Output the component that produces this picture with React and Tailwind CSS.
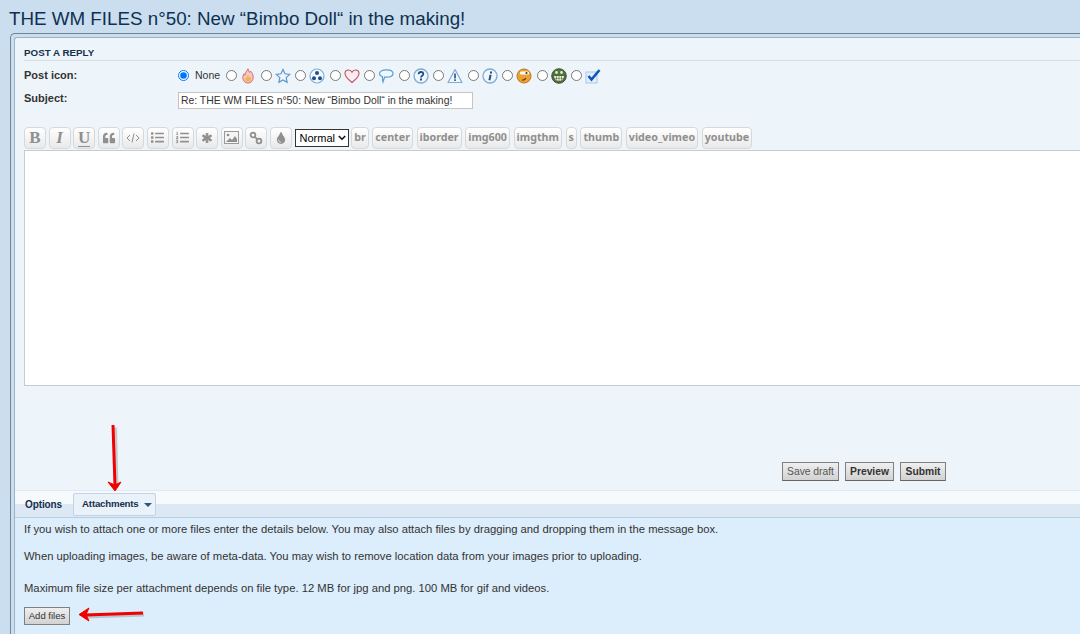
import React from 'react';
import { FaQuoteLeft, FaList, FaListOl, FaAsterisk, FaTint } from 'react-icons/fa';

const Flame = () => (
  <svg width="16" height="16" viewBox="0 0 16 16">
    <path d="M8 .8c.2 1.700 1.200 2.500 1.700 3.700.5-.3.700-.8.800-1.400 1.500 1.500 2.700 3.300 2.700 6.200 0 3.500-2.300 5.700-5.200 5.700s-5.200-2.200-5.200-5.500c0-1.500.6-2.700 1.300-3.700.2.700.4 1.100.8 1.400C5 5 6.800 3 8 .8z" fill="#f6c9c4" stroke="#d9666a" strokeWidth="1" />
    <path d="M8 6.500c0 2 1 2 1.500 3 .5-.3.700-.7.800-1.200.8 1.200 1 3 .4 4.200-.6 1.300-4.900 1.300-5.400 0-.6-1.500.3-2.500 1-3.500.3.500.5.700.8.800C6.800 8.800 7.500 7.500 8 6.500z" fill="#f5b54a" />
  </svg>
);
const Star = () => (
  <svg width="16" height="16" viewBox="0 0 16 16">
    <path d="M8 1.500l2 4.300 4.700.6-3.500 3.200.9 4.700L8 12l-4.100 2.300.9-4.700L1.300 6.400 6 5.800z" fill="#eef5fb" stroke="#5a97cf" strokeWidth="1.200" />
  </svg>
);
const Radioactive = () => (
  <svg width="16" height="16" viewBox="0 0 16 16">
    <circle cx="8" cy="8" r="7" fill="#f4f8fc" stroke="#7fabd6" strokeWidth="1.200" />
    <circle cx="8" cy="5" r="2" fill="#1f4f8a" />
    <circle cx="5" cy="10.300" r="2" fill="#1f4f8a" />
    <circle cx="11" cy="10.300" r="2" fill="#1f4f8a" />
  </svg>
);
const Heart = () => (
  <svg width="16" height="16" viewBox="0 0 16 16">
    <path d="M8 14.500C3 10.500 1 8.500 1 5.500 1 3.300 2.700 2 4.500 2 6 2 7.300 2.800 8 4.200 8.700 2.800 10 2 11.500 2 13.300 2 15 3.300 15 5.500c0 3-2 5-7 9z" fill="#f7eef0" stroke="#c9505f" strokeWidth="1.100" />
  </svg>
);
const Bubble = () => (
  <svg width="16" height="16" viewBox="0 0 16 16">
    <path d="M8.500 1.800c3.500 0 6.500 1.300 6.500 3.700S12 9.200 8.500 9.200c-.7 0-1.300 0-2-.1-.3 1.800-1 3.400-1.500 4.900-.5-1.700-.6-3.500-.6-5.500C2.500 7.900 1.500 6.800 1.500 5.500c0-2.400 3.500-3.700 7-3.700z" fill="#f0f7fd" stroke="#5a9fd6" strokeWidth="1.200" />
  </svg>
);
const Question = () => (
  <svg width="16" height="16" viewBox="0 0 16 16">
    <circle cx="8" cy="8" r="7" fill="#f1f6fb" stroke="#7fabd6" strokeWidth="1.300" />
    <path d="M5.700 6.200C5.700 4.800 6.800 4 8 4s2.300.8 2.300 2.100C10.300 7.800 8 7.800 8 9.500" fill="none" stroke="#1f4f8a" strokeWidth="1.800" />
    <rect x="7" y="10.500" width="2" height="2" fill="#1f4f8a" />
  </svg>
);
const Warning = () => (
  <svg width="16" height="16" viewBox="0 0 16 16">
    <path d="M8 1.500L15 14.500H1z" fill="#f1f6fb" stroke="#7fabd6" strokeWidth="1.200" strokeLinejoin="round" />
    <rect x="7.200" y="5.500" width="1.600" height="5" fill="#1f4f8a" />
    <rect x="7.200" y="11.300" width="1.600" height="1.700" fill="#1f4f8a" />
  </svg>
);
const Info = () => (
  <svg width="16" height="16" viewBox="0 0 16 16">
    <circle cx="8" cy="8" r="7" fill="#f1f6fb" stroke="#7fabd6" strokeWidth="1.300" />
    <path d="M8.600 6.800L7.400 12.200" stroke="#1f4f8a" strokeWidth="2" fill="none" />
    <rect x="8" y="3.500" width="2" height="2" fill="#1f4f8a" />
  </svg>
);
const OrangeFace = () => (
  <svg width="16" height="16" viewBox="0 0 16 16">
    <circle cx="8" cy="8" r="7" fill="#f0a030" stroke="#b97820" strokeWidth="1" />
    <rect x="4" y="3.500" width="9" height="3" rx="1.200" fill="#fff" />
    <circle cx="10.500" cy="5" r="1.100" fill="#333" />
    <path d="M6 12c1.500.2 3-.3 4-1.800" stroke="#5a3a10" strokeWidth="1.200" fill="none" />
  </svg>
);
const GreenFace = () => (
  <svg width="16" height="16" viewBox="0 0 16 16">
    <circle cx="8" cy="8" r="7.300" fill="#4c7a33" stroke="#333" strokeWidth=".8" />
    <circle cx="5.500" cy="4.500" r="1.400" fill="#dfe8d0" />
    <circle cx="10.500" cy="4.500" r="1.400" fill="#dfe8d0" />
    <path d="M2.500 7.500h11c0 3.500-2 5.800-5.500 5.800s-5.500-2.300-5.500-5.800z" fill="#f2f4ea" stroke="#2b3f1c" strokeWidth=".7" />
    <path d="M5.500 7.500v5M8 7.500v5.800M10.500 7.500v5M3 10.300h10" stroke="#4c6a3a" strokeWidth=".6" />
  </svg>
);
const Check = () => (
  <svg width="16" height="16" viewBox="0 0 16 16">
    <rect x="1" y="4" width="11" height="11" fill="#e3eefa" stroke="#a9c6e6" strokeWidth="1" />
    <path d="M3.500 8l3 3.500L14.500 2" stroke="#0f55c0" strokeWidth="2.600" fill="none" />
  </svg>
);

const CodeGlyph = () => (
  <svg width="14" height="12" viewBox="0 0 14 12" fill="none" stroke="currentColor" strokeWidth="1">
    <path d="M4 3L1 6l3 3M10 3l3 3-3 3M8 1.500L6 10.500" />
  </svg>
);
const ImageGlyph = () => (
  <svg width="15" height="13" viewBox="0 0 15 13">
    <rect x=".5" y=".5" width="14" height="12" fill="#f4f4f4" stroke="#9a9a9a" />
    <circle cx="4" cy="4" r="1.300" fill="#8f8f8f" />
    <path d="M2 11l4-4 2 2 3-4 2 3v3z" fill="#8f8f8f" />
  </svg>
);
const LinkGlyph = () => (
  <svg width="14" height="14" viewBox="0 0 14 14" fill="none" stroke="currentColor" strokeWidth="1.800">
    <circle cx="4" cy="4" r="2.400" />
    <circle cx="10" cy="10" r="2.400" />
    <path d="M5.800 5.800l2.400 2.400" />
  </svg>
);

const serifGlyph = "font-['Liberation_Serif',serif] text-[17px] font-bold leading-none";

const postIcons = [Flame, Star, Radioactive, Heart, Bubble, Question, Warning, Info, OrangeFace, GreenFace, Check];

const formatTools = [
  ['Bold', <span className={serifGlyph}>B</span>],
  ['Italic', <span className={`${serifGlyph} italic`}>I</span>],
  ['Underline', <span className={`${serifGlyph} border-b border-[#8f8f8f] text-[15px] leading-[13px]`}>U</span>],
  ['Quote', <FaQuoteLeft className="size-[12px]" />],
  ['Code', <CodeGlyph />],
  ['List', <FaList className="size-[13px]" />],
  ['Ordered list', <FaListOl className="size-[13px]" />],
  ['Item', <FaAsterisk className="size-[10px]" stroke="currentColor" strokeWidth={50} />],
  ['Image', <ImageGlyph />],
  ['Link', <LinkGlyph />],
  ['Colour', <FaTint className="size-[12px]" />],
];

const bbcodes = ['br', 'center', 'iborder', 'img600', 'imgthm', 's', 'thumb', 'video_vimeo', 'youtube'];

const toolBtn = 'flex h-[22px] items-center justify-center rounded-[4px] border border-[#d8d8d8] bg-gradient-to-b from-[#ffffff] to-[#e9e9e9] text-[#8f8f8f]';
const submitBtn = 'h-[19px] whitespace-nowrap border border-[#808080] border-b-[#666666] bg-gradient-to-b from-[#efefef] to-[#d2d2d2] text-[10.300px] leading-[15px] text-[#333333]';

export default function App() {
  return (
    <div className="relative h-[634px] w-[1080px] overflow-hidden bg-[#cadeef] font-['Liberation_Sans',Arial,sans-serif] text-[#333333]">
      <h2 className="pl-[9px] pt-[7px] text-[18.800px] leading-[23px] text-[#10304f]">
        THE WM FILES n°50: New “Bimbo Doll“ in the making!
      </h2>

      {/* Panel runs off the right edge of the window */}
      <div className="ml-[10px] mt-[3px] w-[1300px] rounded-tl-[5px] border-l border-t border-[#6f8698] bg-[#c9deef] pl-[3px] pt-[3px]">
        <div className="rounded-tl-[3px] border-l border-t border-[#9db4c6] bg-[#eef5fa]">
          {/* Post a reply */}
          <div className="px-[9px] pt-[8px]">
            <h3 className="border-b border-[#d8dfe4] pb-[1px] text-[9.800px] font-bold leading-[13px] text-[#15304c]">POST A REPLY</h3>

            <div className="mt-[6px] flex h-[16px] items-center">
              <label className="w-[154px] text-[11px] font-bold">Post icon:</label>
              <input type="radio" name="icon" defaultChecked className="m-0 size-[11px] shrink-0" />
              <span className="ml-[6px] w-[31px] translate-y-[1px] text-[10.500px]">None</span>
              {postIcons.map((Icon, i) => (
                <span key={i} className="flex w-[34.500px] shrink-0 items-center gap-[3px]">
                  <input type="radio" name="icon" className="m-0 size-[11px] shrink-0" />
                  <span className="translate-y-[1px]"><Icon /></span>
                </span>
              ))}
            </div>

            <div className="mt-[9px] flex h-[17px] items-center">
              <label className="w-[154px] -translate-y-[2px] text-[11px] font-bold">Subject:</label>
              <input
                type="text"
                readOnly
                value="Re: THE WM FILES n°50: New “Bimbo Doll“ in the making!"
                className="h-[17px] w-[295px] border border-[#c7c3bf] bg-white px-[2px] text-[10.400px] text-[#333333]"
              />
            </div>

            {/* Format toolbar */}
            <div className="mt-[17px] flex h-[23px] items-center gap-[2.600px]">
              {formatTools.map(([name, glyph]) => (
                <button key={name} title={name} className={`${toolBtn} w-[22px]`}>
                  {glyph}
                </button>
              ))}
              <div className="relative">
                <select className="block h-[18px] w-[54px] appearance-none border border-[#333333] bg-white pl-[4px] text-[11px] text-black">
                  <option>Normal</option>
                </select>
                <svg className="absolute right-[3px] top-[6px]" width="8" height="6" viewBox="0 0 8 6" fill="none" stroke="#111" strokeWidth="1.600">
                  <path d="M.8 1l3.200 3.200L7.200 1" />
                </svg>
              </div>
              {bbcodes.map((code) => (
                <button key={code} className={`${toolBtn} mr-[1px] px-[2px] font-['Noto_Sans',sans-serif] text-[10.700px] font-bold leading-none`}>
                  {code}
                </button>
              ))}
            </div>

            <div className="mt-[1px] h-[236px] w-[1200px] border border-[#c3ccd4] bg-white" />

            <div className="ml-[758px] mt-[76px] flex gap-[6px]">
              <button className={`${submitBtn} w-[57px] text-[#555555]`}>Save draft</button>
              <button className={`${submitBtn} w-[49px] font-bold`}>Preview</button>
              <button className={`${submitBtn} w-[46px] font-bold`}>Submit</button>
            </div>
          </div>

          {/* Tabs */}
          <div className="mt-[9px] flex h-[28px] items-center border-b border-t border-b-[#b7cde0] border-t-[#dfe9f1] bg-gradient-to-b from-[#f6fafd] from-50% to-[#dde8f5] to-50% pl-[10px]">
            <span className="text-[10px] font-bold tracking-[-.1px] text-[#15304c]">Options</span>
            <div className="ml-[11px] flex h-[23px] w-[83px] items-center gap-[5px] rounded-[2px] border border-[#c1d3e4] bg-[#e9f1f9] pl-[8px] text-[9.700px] font-bold tracking-[-.2px] text-[#15304c]">
              Attachments
              <span className="mt-[1px] border-x-[4px] border-t-[4px] border-x-transparent border-t-[#33557a]" />
            </div>
          </div>

          {/* Attachments panel */}
          <div className="h-[120px] bg-[#dcedfb] pl-[9px] pt-[4px] text-[11.250px] leading-[15px] text-[#333333]">
            <p>If you wish to attach one or more files enter the details below. You may also attach files by dragging and dropping them in the message box.</p>
            <p className="mt-[12px]">When uploading images, be aware of meta-data. You may wish to remove location data from your images prior to uploading.</p>
            <p className="mt-[17px]">Maximum file size per attachment depends on file type. 12 MB for jpg and png. 100 MB for gif and videos.</p>
            <button className="mt-[11px] h-[18px] w-[46px] whitespace-nowrap border border-[#808080] bg-gradient-to-b from-[#efefef] to-[#d2d2d2] text-[9.500px] leading-[14px]">Add files</button>
          </div>
        </div>
      </div>

      {/* Red annotation arrows */}
      <svg className="absolute left-[100px] top-[420px]" width="30" height="75" viewBox="0 0 30 75">
        <path d="M14 6l1.500 60" stroke="#888" strokeOpacity=".4" strokeWidth="3" fill="none" transform="translate(1.500 1.500)" />
        <path d="M13 5l2 61" stroke="#f00000" strokeWidth="3" fill="none" />
        <path d="M8 62l7 9 6-9-6 3z" fill="#f00000" stroke="#f00000" strokeWidth="1" />
      </svg>
      <svg className="absolute left-[75px] top-[603px]" width="75" height="24" viewBox="0 0 75 24">
        <path d="M68 10l-58 2" stroke="#888" strokeOpacity=".4" strokeWidth="3" fill="none" transform="translate(1 2)" />
        <path d="M68 10l-58 2" stroke="#f00000" strokeWidth="3" fill="none" />
        <path d="M14 5l-10 6.500 10 6.500-3-6.500z" fill="#f00000" stroke="#f00000" strokeWidth="1" />
      </svg>
    </div>
  );
}
